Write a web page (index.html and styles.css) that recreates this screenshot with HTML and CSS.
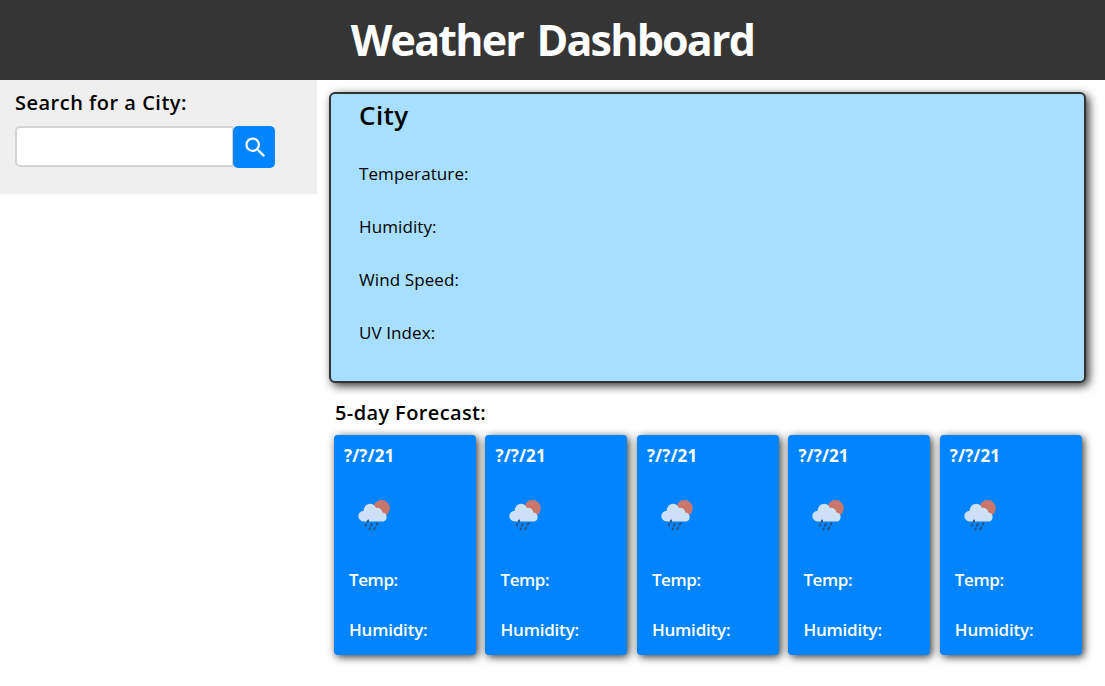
FILE: index.html
```html
<!DOCTYPE html>
<html lang="en">
<head>
<meta charset="utf-8">
<title>Weather Dashboard</title>
<link rel="stylesheet" href="styles.css">
</head>
<body>
<svg class="defs" width="0" height="0" aria-hidden="true">
  <symbol id="rain" viewBox="0 0 34 32">
    <circle cx="23.5" cy="9.3" r="8.3" fill="#ca766b"/>
    <path d="M5.6 22.5a5.4 5.4 0 0 1 .2-10.8 6.3 6.3 0 0 1 12.2-2.7 4.8 4.8 0 0 1 6.3 4.5 4.7 4.7 0 0 1 1.5 9z" fill="#cce0f6"/>
    <path d="M10.2 21.4l-.6 1.4M8.2 25.4l-.8 1.4M13.8 24.9l-1 1.8M19.6 24.1l-1 1.6M12 29.2l-.6 1M17.2 28.6l-.9 1.6" stroke="#344d70" stroke-width="1.8" stroke-linecap="round"/>
  </symbol>
</svg>
<header class="header"><h1 class="title">Weather Dashboard</h1></header>
<div class="layout">
  <aside class="sidebar">
    <h2 class="search-title">Search for a City:</h2>
    <form class="search">
      <input class="search-input" type="text" aria-label="City">
      <button class="search-button" type="button" aria-label="Search">
        <svg width="27" height="27" viewBox="0 0 24 24" fill="#fff"><path d="M15.5 14h-.79l-.28-.27A6.471 6.471 0 0 0 16 9.5 6.5 6.5 0 1 0 9.5 16c1.61 0 3.09-.59 4.23-1.57l.27.28v.79l5 4.99L20.49 19l-4.99-5zm-6 0C7.01 14 5 11.99 5 9.5S7.01 5 9.5 5 14 7.01 14 9.5 11.99 14 9.5 14z"/></svg>
      </button>
    </form>
  </aside>
  <main class="main">
    <section class="current">
      <h2 class="city">City</h2>
      <p class="stat">Temperature:</p>
      <p class="stat">Humidity:</p>
      <p class="stat">Wind Speed:</p>
      <p class="stat">UV Index:</p>
    </section>
    <h3 class="forecast-title">5-day Forecast:</h3>
    <section class="forecast">
      <article class="day"><h4 class="date">?/?/21</h4><svg class="icon"><use href="#rain"/></svg><p class="temp">Temp:</p><p class="hum">Humidity:</p></article>
      <article class="day"><h4 class="date">?/?/21</h4><svg class="icon"><use href="#rain"/></svg><p class="temp">Temp:</p><p class="hum">Humidity:</p></article>
      <article class="day"><h4 class="date">?/?/21</h4><svg class="icon"><use href="#rain"/></svg><p class="temp">Temp:</p><p class="hum">Humidity:</p></article>
      <article class="day"><h4 class="date">?/?/21</h4><svg class="icon"><use href="#rain"/></svg><p class="temp">Temp:</p><p class="hum">Humidity:</p></article>
      <article class="day"><h4 class="date">?/?/21</h4><svg class="icon"><use href="#rain"/></svg><p class="temp">Temp:</p><p class="hum">Humidity:</p></article>
    </section>
  </main>
</div>
</body>
</html>
```

FILE: styles.css
```css
* { box-sizing: border-box; }
body {
  margin: 0;
  min-height: 100vh;
  background: #fff;
  color: #000;
  font-family: "Trebuchet MS", "Open Sans", "Noto Sans", sans-serif;
}
h1, h2, h3, h4, p { margin: 0; white-space: nowrap; }
.defs { display: block; height: 0; }
.header {
  height: 80px;
  background: #353535;
  color: #fff;
  text-align: center;
}
.title {
  font-size: 43px;
  line-height: 79px;
  font-weight: 700;
  letter-spacing: -1.8px;
  word-spacing: 4px;
}
.layout { display: flex; align-items: flex-start; }
.sidebar {
  width: 317px;
  height: 114px;
  padding: 8px 15px;
  background: #efefef;
}
.search-title { font-size: 20px; line-height: 30px; font-weight: 600; letter-spacing: 0.5px; }
.search { display: flex; align-items: flex-start; margin-top: 8px; }
.search-input {
  width: 218px;
  height: 41px;
  border: 2px solid #d3d3d3;
  border-right-width: 1px;
  border-radius: 5px 0 0 5px;
  background: #fff;
}
.search-button {
  display: flex;
  align-items: center;
  justify-content: center;
  width: 42px;
  height: 42px;
  padding: 1px 0 0 2px;
  border: 0;
  border-radius: 5px;
  background: #0084ff;
}
.main { width: 757px; margin: 12px 0 0 12px; padding-bottom: 20px; }
.current {
  height: 291px;
  padding: 3px 28px;
  border: 2px solid #333;
  border-radius: 6px;
  background: #a8deff;
  box-shadow: 3px 3px 10px rgba(0, 0, 0, 0.8);
}
.city {
  margin-bottom: 14px;
  font-size: 26px;
  line-height: 36px;
  font-weight: 600;
  letter-spacing: 0.4px;
}
.stat { font-size: 17px; line-height: 53px; letter-spacing: 0.1px; }
.forecast-title {
  margin: 15px 0 7px 6px;
  font-size: 20px;
  line-height: 30px;
  font-weight: 600;
  letter-spacing: 0.38px;
}
.forecast {
  display: grid;
  grid-template-columns: repeat(5, 1fr);
  column-gap: 9.8px;
  width: 747.5px;
  margin-left: 5px;
}
.day {
  height: 220px;
  padding: 8px 10px;
  border-radius: 4px;
  background: #0084ff;
  color: #fff;
  box-shadow: 2px 2px 8px rgba(0, 0, 0, 0.8);
}
.date { font-size: 17px; line-height: 25px; font-weight: 700; letter-spacing: 0.1px; }
.icon { display: block; width: 34px; height: 32px; margin: 31px 0 0 14px; }
.temp, .hum {
  margin-left: 5px;
  font-size: 17px;
  line-height: 50px;
  font-weight: 600;
  letter-spacing: -0.2px;
}
.temp { margin-top: 24px; letter-spacing: -0.4px; }
```
